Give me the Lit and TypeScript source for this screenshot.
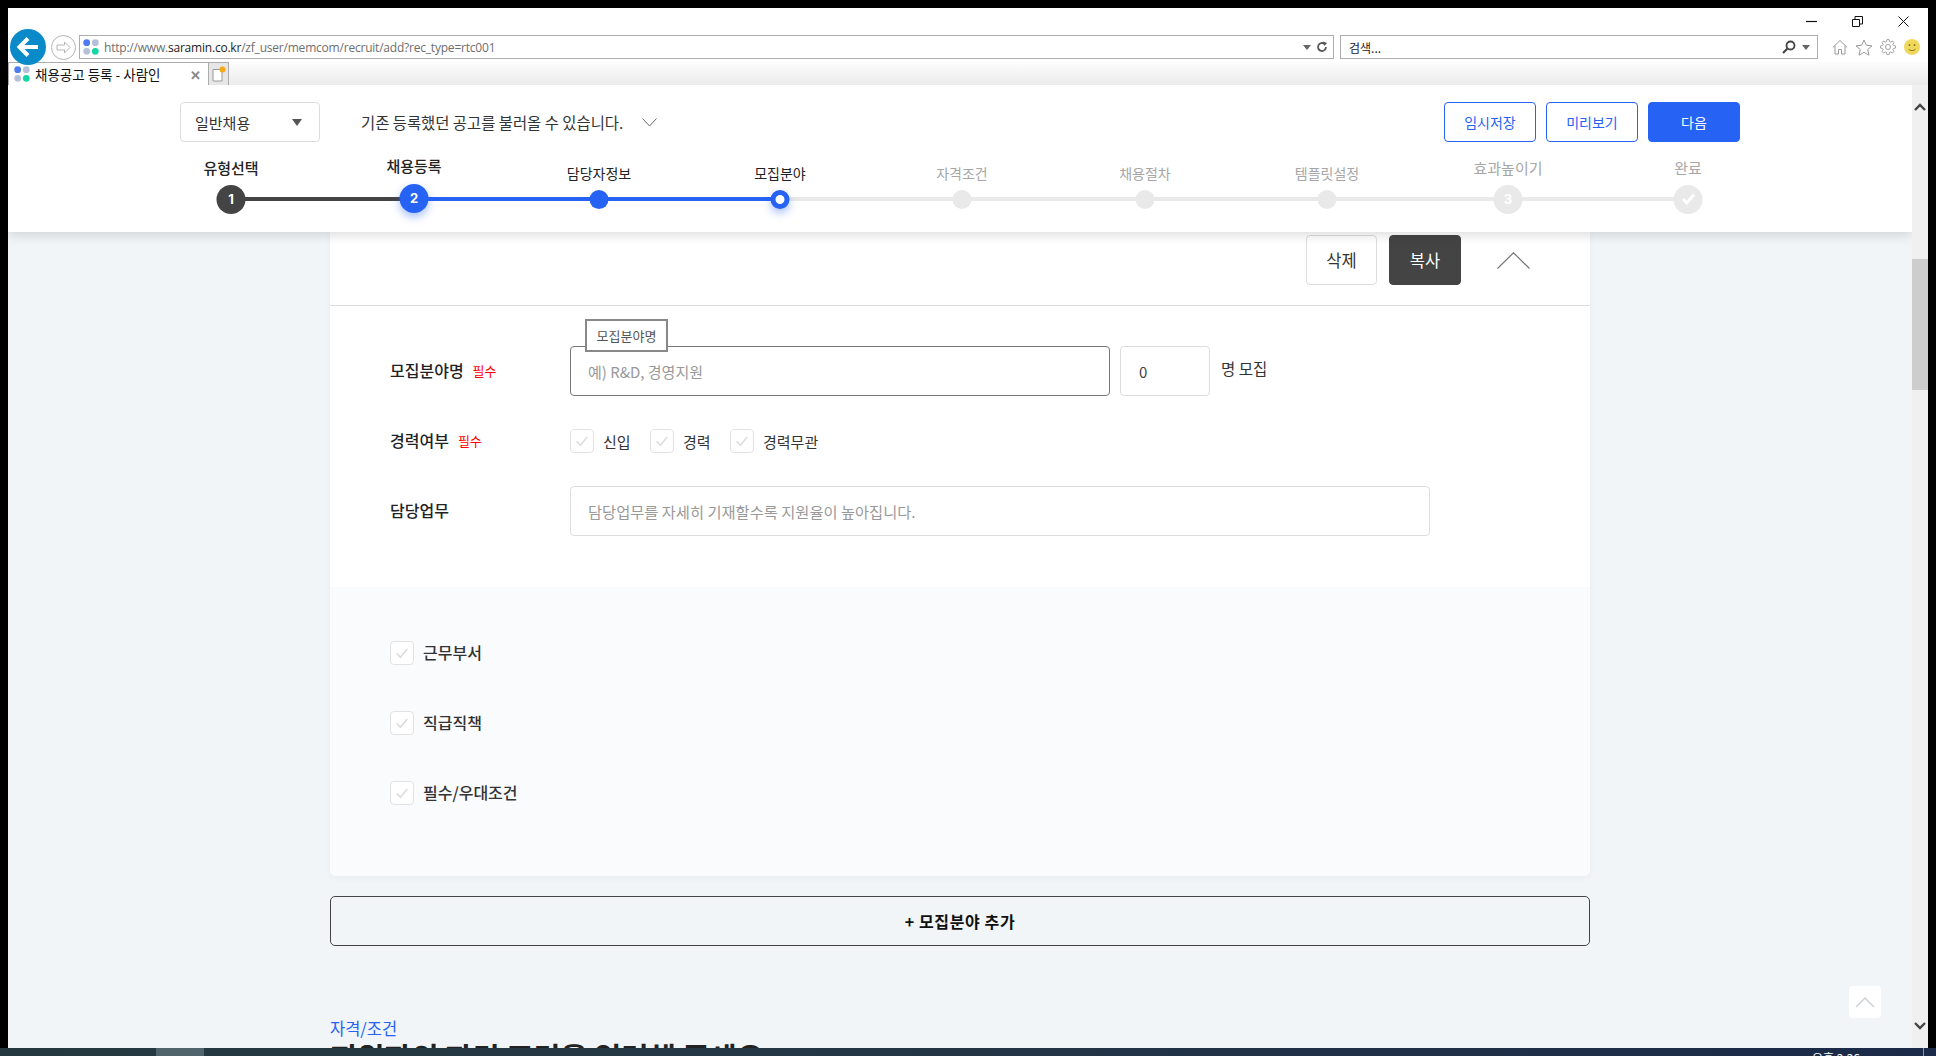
import { LitElement, html, css, svg } from "lit";
import { customElement } from "lit/decorators.js";

interface Step {
  label: string;
  kind: "big" | "small";
  state: "done" | "active" | "current" | "todo";
  mark?: unknown;
  center: number;
}

const tick = svg`<svg width="14" height="12" viewBox="0 0 14 12"><path d="M1.500 6l3.800 4L12.500 1.500" fill="none" stroke="#fff" stroke-width="3"/></svg>`;

const STEPS: Step[] = [
  { label: "유형선택", kind: "big", state: "done", mark: "1", center: 231 },
  { label: "채용등록", kind: "big", state: "active", mark: "2", center: 414 },
  { label: "담당자정보", kind: "small", state: "active", center: 599 },
  { label: "모집분야", kind: "small", state: "current", center: 780 },
  { label: "자격조건", kind: "small", state: "todo", center: 962 },
  { label: "채용절차", kind: "small", state: "todo", center: 1145 },
  { label: "템플릿설정", kind: "small", state: "todo", center: 1327 },
  { label: "효과높이기", kind: "big", state: "todo", mark: "3", center: 1508 },
  { label: "완료", kind: "big", state: "todo", mark: tick, center: 1688 },
];

const favicon = svg`<svg class="fav" viewBox="0 0 16 16" width="16" height="16"><circle cx="3.7" cy="3.7" r="3.4" fill="#4d7cf0"/><circle cx="12.3" cy="3.7" r="3.4" fill="#b5c0d8"/><circle cx="3.7" cy="12.3" r="3.4" fill="#b5c0d8"/><circle cx="12.3" cy="12.3" r="3.4" fill="#12d6a6"/></svg>`;

const check = svg`<svg viewBox="0 0 24 24" width="16" height="16"><path d="M4 12.5l5.5 6L20 6" fill="none" stroke="#dcdcdc" stroke-width="2.4"/></svg>`;

function gearPoints(): string {
  const pts: string[] = [];
  const teeth = 8;
  for (let i = 0; i < teeth; i++) {
    const a = (i / teeth) * Math.PI * 2;
    const step = (Math.PI * 2) / teeth;
    const spec: [number, number][] = [
      [5.6, -0.5],
      [7.5, -0.24],
      [7.5, 0.24],
      [5.6, 0.5],
    ];
    for (const [r, off] of spec) {
      const t = a + off * step * 0.75;
      pts.push(`${(8 + r * Math.cos(t)).toFixed(2)},${(8 + r * Math.sin(t)).toFixed(2)}`);
    }
  }
  return pts.join(" ");
}

@customElement("app-root")
export class AppRoot extends LitElement {
  static styles = css`
    :host {
      display: block;
      width: 1936px;
      height: 1056px;
      background: #000;
      overflow: hidden;
      font-family: "Noto Sans CJK KR", "Noto Sans", sans-serif;
      color: #222;
    }
    * { box-sizing: border-box; }
    .window {
      margin: 0 8px;
      padding-top: 8px;
      height: 1048px;
      display: flex;
      flex-direction: column;
    }
    /* browser chrome */
    .chrome { height: 77px; background: #fff; flex: none; position: relative; z-index: 3; }
    .winctl { height: 27px; display: flex; justify-content: flex-end; align-items: center; padding-right: 19px; gap: 35px; color: #111; }
    .winctl svg { display: block; }
    .addr { height: 24px; display: flex; align-items: center; padding-left: 2px; }
    .back {
      width: 36px; height: 36px; border-radius: 50%;
      background: #0a8ac8; flex: none; position: relative; z-index: 2;
      display: flex; align-items: center; justify-content: center;
    }
    .fwd {
      width: 25px; height: 25px; border-radius: 50%; border: 1px solid #b5b5b5;
      margin-left: 5px; flex: none; background: #fff;
      display: flex; align-items: center; justify-content: center;
    }
    .box {
      height: 24px; border: 1px solid #adadad; background: #fff;
      display: flex; align-items: center; font-size: 12px; flex: none;
    }
    .url { width: 1255px; margin-left: 3px; padding: 0 5px 0 3px; gap: 5px; font-family: "Open Sans", "Noto Sans", sans-serif; color: #6e6e6e; letter-spacing: -0.21px; }
    .url b { font-weight: 400; color: #222; }
    .url .grow, .search .grow { flex: 1; }
    .search { width: 478px; margin-left: 6px; padding: 0 7px 0 8px; color: #222; gap: 6px; }
    .tools { display: flex; align-items: center; margin-left: 14px; gap: 7px; }
    .tools .smile { margin-left: 1px; }
    .tabs {
      height: 23px; margin-top: 3px; display: flex;
      background: linear-gradient(#fdfdfd, #ebebeb);
    }
    .tab {
      width: 200px; height: 23px; background: #fff; border: 1px solid #acacac; border-bottom: 0; border-right: 0;
      display: flex; align-items: center; padding: 0 7px 0 5px; font-size: 13.5px; color: #111;
    }
    .tab span { margin-left: 5px; flex: 1; }
    .tab .x { flex: none; color: #888; font-size: 13px; margin: 0; font-weight: 700; }
    .newtab {
      width: 21px; height: 23px; background: #e6e6e6; border: 1px solid #acacac; border-bottom: 0;
      display: flex; align-items: center; justify-content: center;
    }
    /* viewport */
    .viewport { flex: 1; display: flex; min-height: 0; }
    .page { width: 1904px; flex: none; background: #f1f5f8; overflow: hidden; position: relative; }
    .scrollbar { width: 16px; flex: none; background: #f0f0f0; display: flex; flex-direction: column; }
    .sb-btn { height: 44px; flex: none; display: flex; align-items: center; justify-content: center; }
    .sb-gap { height: 130px; flex: none; }
    .sb-thumb { height: 131px; flex: none; background: #cdcdcd; }
    .sb-fill { flex: 1; }
    /* sticky header */
    .head {
      height: 147px; padding-top: 17px; background: #fff; position: relative; z-index: 2;
      box-shadow: 0 2px 12px rgba(0, 0, 0, 0.16);
    }
    .head-top { display: flex; align-items: center; height: 40px; margin: 0 0 0 172px; padding-right: 172px; }
    .select {
      width: 140px; height: 40px; border: 1px solid #ddd; border-radius: 4px;
      display: flex; align-items: center; justify-content: space-between;
      padding: 0 17px 0 14px; font-size: 15px; color: #333;
    }
    .tri { width: 0; height: 0; border-left: 5.5px solid transparent; border-right: 5.5px solid transparent; border-top: 7px solid #555; }
    .load { margin-left: 41px; font-size: 15.4px; color: #333; display: flex; align-items: center; gap: 19px; }
    .actions { margin-left: auto; display: flex; gap: 10px; }
    .btn {
      width: 92px; height: 40px; border-radius: 4px; border: 1px solid #2662f4; color: #2662f4; background: #fff;
      font-size: 14px; display: flex; align-items: center; justify-content: center;
    }
    .btn.primary { background: #2662f4; color: #fff; }
    .stepper { display: flex; height: 77px; margin: 13px 0 0 223px; }
    .step { position: relative; display: flex; flex-direction: column; justify-content: flex-end; align-items: flex-start; padding-bottom: 18px; flex: none; }
    .step::before { content: ""; position: absolute; left: 0; right: 0; bottom: 31px; height: 4px; background: #e9e9e9; }
    .step.line-dark::before { background: #444; }
    .step.line-blue::before { background: #2662f4; }
    .lab { transform: translateX(-50%); white-space: nowrap; line-height: 20px; }
    .lab.small { font-size: 14px; color: #222; margin-bottom: 1px; }
    .lab.big { font-size: 15px; font-weight: 500; color: #222; margin-bottom: 6px; }
    .lab.raise { margin-bottom: 8px; }
    .lab.todo { color: #a6a6a6; font-weight: 400; }
    .slot { height: 30px; display: flex; align-items: center; transform: translateX(-50%); position: relative; }
    .dot {
      border-radius: 50%; display: flex; align-items: center; justify-content: center;
      color: #fff; font-size: 13px; font-weight: 700; font-family: "Inter", sans-serif;
    }
    .dot.big { width: 29px; height: 29px; }
    .dot.small { width: 19px; height: 19px; }
    .dot.done { background: #444; }
    .dot.active { background: #2662f4; }
    .dot.active.big { box-shadow: 0 4px 8px rgba(38, 98, 244, 0.4); position: relative; top: -1px; }
    .dot.current { background: #fff; border: 5px solid #2662f4; box-shadow: 0 4px 8px rgba(38, 98, 244, 0.4); }
    .dot.todo { background: #e9e9e9; }
    /* content */
    .content { width: 1260px; margin-left: 322px; }
    .card { background: #fff; border-radius: 0 0 6px 6px; box-shadow: 0 2px 6px rgba(0, 0, 0, 0.04); }
    .card-head {
      height: 74px; padding: 3px 60px 0 0; border-bottom: 1px solid #ddd;
      display: flex; align-items: flex-start; justify-content: flex-end;
    }
    .cbtn {
      width: 71px; height: 50px; border-radius: 4px; border: 1px solid #ddd; background: #fff; font-size: 16.5px; color: #333;
      display: flex; align-items: center; justify-content: center; margin-right: 12px;
    }
    .cbtn.dark { width: 72px; background: #444; border-color: #444; color: #fff; margin-right: 36px; }
    .collapse { width: 33px; height: 50px; display: flex; align-items: center; }
    .form { padding: 40px 60px 51px; display: flex; flex-direction: column; gap: 20px; }
    .row { display: flex; align-items: center; height: 50px; }
    .rlabel { width: 180px; flex: none; display: flex; align-items: center; font-size: 16px; font-weight: 500; color: #222; padding-bottom: 2px; }
    .req { color: #f00; font-size: 13px; font-weight: 400; margin-left: 9px; }
    .field {
      height: 50px; border: 1px solid #ddd; border-radius: 4px; background: #fff;
      display: flex; align-items: center; padding-left: 17px; font-size: 15px; color: #999; flex: none;
      position: relative;
    }
    .field.name { width: 540px; border-color: #777; }
    .field.count { width: 90px; margin-left: 10px; color: #444; padding-left: 18px; }
    .field.duty { width: 860px; font-size: 15.3px; }
    .tip {
      position: absolute; left: 14px; top: -28px; width: 83px; height: 33px;
      border: 2px solid #888; background: #fff; color: #555; font-size: 13px;
      display: flex; align-items: center; justify-content: center;
    }
    .unit { margin-left: 11px; font-size: 15.5px; color: #333; position: relative; top: -3px; }
    .checks { display: flex; gap: 0; }
    .opt { display: flex; align-items: center; height: 24px; font-size: 15px; color: #333; }
    .box-check {
      width: 24px; height: 24px; border: 1px solid #e2e2e2; border-radius: 4px; background: #fff;
      display: flex; align-items: center; justify-content: center; flex: none; margin-right: 9px;
    }
    .checks .opt:nth-child(1) { width: 80px; }
    .checks .opt:nth-child(2) { width: 80px; }
    .extra { background: #f9fbfd; padding: 54px 60px 71px; display: flex; flex-direction: column; gap: 46px; border-radius: 0 0 6px 6px; }
    .extra .opt { font-size: 16px; font-weight: 500; color: #333; }
    .extra .txt { line-height: 20px; margin-bottom: 3px; }
    .add {
      height: 50px; margin-top: 20px; border: 1px solid #444; border-radius: 5px;
      display: flex; align-items: center; justify-content: center;
      font-size: 16px; letter-spacing: 0.6px; font-weight: 700; color: #111;
    }
    .eyebrow { margin-top: 71px; font-size: 16.5px; line-height: 22px; color: #2662f4; }
    .title { margin-top: 2px; font-size: 29.5px; font-weight: 700; line-height: 30px; color: #222; white-space: nowrap; }
    .totop {
      position: absolute; right: 31px; top: 901px; width: 32px; height: 32px;
      background: #fff; border-radius: 4px; display: flex; align-items: center; justify-content: center; z-index: 1;
    }
    /* taskbar */
    .taskbar {
      height: 8px; background: linear-gradient(90deg, #24393f 0%, #233645 45%, #1b2a48 100%);
      display: flex; overflow: hidden; position: relative; z-index: 4;
    }
    .task-item { width: 48px; height: 8px; margin-left: 156px; background: #50646c; flex: none; }
    .clock { margin-left: auto; margin-right: 63px; padding-top: 2px; font-size: 12px; line-height: 16px; color: #fff; white-space: nowrap; }
    .task-edge { width: 1px; background: #8a94a3; margin-right: 12px; }
  `;

  private renderStep(s: Step, i: number) {
    const next = STEPS[i + 1];
    const width = next ? next.center - s.center : 0;
    const lineClass = !next ? "no-line" : i === 0 ? "line-dark" : i < 3 ? "line-blue" : "";
    const raise = s.kind === "big" && s.state === "active" ? "raise" : "";
    return html`<div class="step ${lineClass}" style="width:${width}px">
      <div class="lab ${s.kind} ${raise} ${s.state === "todo" ? "todo" : ""}">${s.label}</div>
      <div class="slot"><div class="dot ${s.kind} ${s.state}">${s.mark ?? ""}</div></div>
    </div>`;
  }

  private opt(label: string) {
    return html`<div class="opt"><span class="box-check">${check}</span><span class="txt">${label}</span></div>`;
  }

  render() {
    return html`
      <div class="window">
        <div class="chrome">
          <div class="winctl">
            <svg width="11" height="11" viewBox="0 0 11 11"><path d="M0 5.5h11" stroke="#111" stroke-width="1.2"/></svg>
            <svg width="11" height="11" viewBox="0 0 11 11" fill="none" stroke="#111"><path d="M.5 3.5h7v7h-7zM3 3V.5h7.5V8H8"/></svg>
            <svg width="11" height="11" viewBox="0 0 11 11"><path d="M.5.5l10 10M10.5.5l-10 10" stroke="#111" fill="none"/></svg>
          </div>
          <div class="addr">
            <div class="back"><svg width="24" height="22" viewBox="0 0 24 22"><path d="M12 2.5L3.5 11l8.5 8.5M4 11h18" fill="none" stroke="#fff" stroke-width="4"/></svg></div>
            <div class="fwd"><svg width="15" height="13" viewBox="0 0 15 13"><path d="M8.5 1L14 6.500 8.500 12V9H1V4h7.500z" fill="none" stroke="#b5b5b5"/></svg></div>
            <div class="box url">
              ${favicon}
              <span>http://www.<b>saramin.co.kr</b>/zf_user/memcom/recruit/add?rec_type=rtc001</span>
              <span class="grow"></span>
              <svg width="8" height="5" viewBox="0 0 8 5"><path d="M0 0h8L4 5z" fill="#666"/></svg>
              <svg width="12" height="12" viewBox="0 0 12 12"><path d="M10 6a4 4 0 1 1-1.500-3.100" fill="none" stroke="#555" stroke-width="1.800"/><path d="M7 .5L11 2 8.500 5z" fill="#555"/></svg>
            </div>
            <div class="box search">
              <span>검색...</span>
              <span class="grow"></span>
              <svg width="14" height="14" viewBox="0 0 14 14"><circle cx="8.500" cy="5.500" r="4" fill="none" stroke="#444" stroke-width="1.800"/><path d="M5.500 8.500L1 13" stroke="#444" stroke-width="2.200"/></svg>
              <svg width="8" height="5" viewBox="0 0 8 5"><path d="M0 0h8L4 5z" fill="#666"/></svg>
            </div>
            <div class="tools">
              <svg width="16" height="16" viewBox="0 0 16 16" fill="none" stroke="#999"><path d="M.8 8.500L8 1.500l7.200 7M3 7v8h3.500v-4.500h3V15H13V7"/></svg>
              <svg width="18" height="17" viewBox="0 0 18 17" fill="none" stroke="#999"><path d="M9 1l2.300 5.300 5.700.5-4.300 3.800 1.300 5.600L9 13.300l-5 2.900 1.300-5.600L1 6.800l5.700-.5z"/></svg>
              <svg width="16" height="16" viewBox="0 0 16 16" fill="none" stroke="#999" stroke-width="0.9"><polygon points="${gearPoints()}"/><circle cx="8" cy="8" r="2.500"/></svg>
              <svg class="smile" width="16" height="16" viewBox="0 0 16 16"><circle cx="8" cy="8" r="8" fill="#f0d85c"/><circle cx="5.500" cy="6" r="1" fill="#8a7a20"/><circle cx="10.500" cy="6" r="1" fill="#8a7a20"/><path d="M4.500 10c1.500 2 5.500 2 7 0" fill="none" stroke="#8a7a20"/></svg>
            </div>
          </div>
          <div class="tabs">
            <div class="tab">${favicon}<span>채용공고 등록 - 사람인</span><span class="x">✕</span></div>
            <div class="newtab"><svg width="14" height="16" viewBox="0 0 14 16"><path d="M1 3.500h9V15H1z" fill="#fff" stroke="#999"/><circle cx="10.500" cy="3.500" r="3" fill="#f4a81c"/></svg></div>
          </div>
        </div>

        <div class="viewport">
          <div class="page">
            <div class="head">
              <div class="head-top">
                <div class="select"><span>일반채용</span><span class="tri"></span></div>
                <div class="load">
                  <span>기존 등록했던 공고를 불러올 수 있습니다.</span>
                  <svg width="15" height="9" viewBox="0 0 15 9"><path d="M.5 .5l7 7.500 7-7.500" fill="none" stroke="#666"/></svg>
                </div>
                <div class="actions">
                  <div class="btn">임시저장</div>
                  <div class="btn">미리보기</div>
                  <div class="btn primary">다음</div>
                </div>
              </div>
              <div class="stepper">${STEPS.map((s, i) => this.renderStep(s, i))}</div>
            </div>

            <div class="content">
              <div class="card">
                <div class="card-head">
                  <div class="cbtn">삭제</div>
                  <div class="cbtn dark">복사</div>
                  <div class="collapse"><svg width="33" height="17" viewBox="0 0 33 17"><path d="M.5 16.500L16.500 .8l16 15.700" fill="none" stroke="#777" stroke-width="1.200"/></svg></div>
                </div>
                <div class="form">
                  <div class="row">
                    <div class="rlabel">모집분야명<span class="req">필수</span></div>
                    <div class="field name"><div class="tip">모집분야명</div>예) R&amp;D, 경영지원</div>
                    <div class="field count">0</div>
                    <div class="unit">명 모집</div>
                  </div>
                  <div class="row">
                    <div class="rlabel">경력여부<span class="req">필수</span></div>
                    <div class="checks">
                      ${this.opt("신입")}${this.opt("경력")}${this.opt("경력무관")}
                    </div>
                  </div>
                  <div class="row">
                    <div class="rlabel">담당업무</div>
                    <div class="field duty">담당업무를 자세히 기재할수록 지원율이 높아집니다.</div>
                  </div>
                </div>
                <div class="extra">
                  ${this.opt("근무부서")}${this.opt("직급직책")}${this.opt("필수/우대조건")}
                </div>
              </div>
              <div class="add">+ 모집분야 추가</div>
              <div class="eyebrow">자격/조건</div>
              <div class="title">지원자의 자격 조건을 입력해 주세요</div>
            </div>

            <div class="totop"><svg width="20" height="11" viewBox="0 0 20 11"><path d="M1 10l9-9 9 9" fill="none" stroke="#cfd2d6" stroke-width="1.500"/></svg></div>
          </div>
          <div class="scrollbar">
            <div class="sb-btn"><svg width="12" height="8" viewBox="0 0 12 8"><path d="M1 7l5-5 5 5" fill="none" stroke="#444" stroke-width="2.400"/></svg></div>
            <div class="sb-gap"></div>
            <div class="sb-thumb"></div>
            <div class="sb-fill"></div>
            <div class="sb-btn"><svg width="12" height="8" viewBox="0 0 12 8"><path d="M1 1l5 5 5-5" fill="none" stroke="#444" stroke-width="2.400"/></svg></div>
          </div>
        </div>
      </div>
      <div class="taskbar">
        <div class="task-item"></div>
        <div class="clock">오후 2:26</div>
        <div class="task-edge"></div>
      </div>
    `;
  }
}
